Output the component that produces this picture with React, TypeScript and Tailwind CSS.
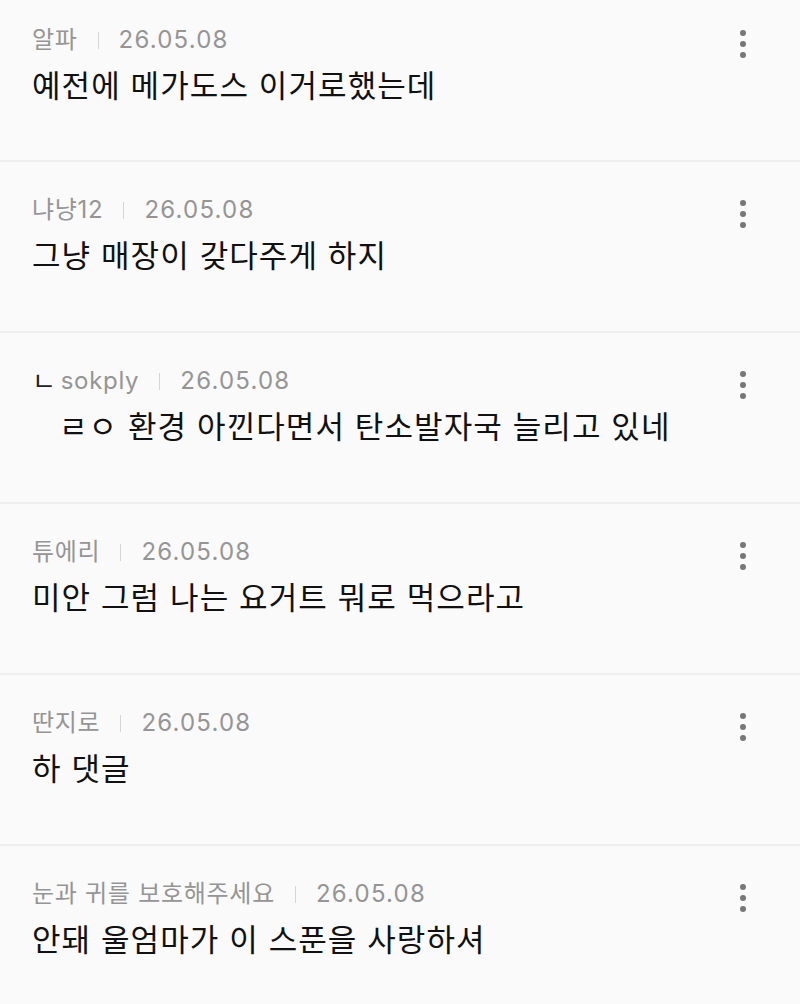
import React from 'react';

type Comment = {
  author: string;
  date: string;
  body: string;
  reply?: boolean;
};

const comments: Comment[] = [
  { author: '알파', date: '26.05.08', body: '예전에 메가도스 이거로했는데' },
  { author: '냐냥12', date: '26.05.08', body: '그냥 매장이 갖다주게 하지' },
  { author: 'sokply', date: '26.05.08', body: 'ㄹㅇ 환경 아낀다면서 탄소발자국 늘리고 있네', reply: true },
  { author: '튜에리', date: '26.05.08', body: '미안 그럼 나는 요거트 뭐로 먹으라고' },
  { author: '딴지로', date: '26.05.08', body: '하 댓글' },
  { author: '눈과 귀를 보호해주세요', date: '26.05.08', body: '안돼 울엄마가 이 스푼을 사랑하셔' },
];

const MoreIcon = () => (
  <svg width="8" height="30" viewBox="0 0 8 30" className="text-[#777777]">
    <circle cx="4" cy="4" r="3" fill="currentColor" />
    <circle cx="4" cy="15" r="3" fill="currentColor" />
    <circle cx="4" cy="26" r="3" fill="currentColor" />
  </svg>
);

const CommentRow: React.FC<{ c: Comment }> = ({ c }) => (
  <div className="flex h-[171px] first:h-[162px] pt-[32px] first:pt-[24px] pl-[32px] pr-[53px] border-b-2 border-[#eeeeee] last:border-b-0">
    <div className="flex-1 min-w-0">
      <div className="flex items-center h-[32px] text-[24px] text-[#959595] tracking-[0.03em]">
        {c.reply && <span className="text-[#222222] mr-[4px] text-[26px]">ㄴ</span>}
        <span>{c.author}</span>
        <span className="mx-[20px] w-px h-[17px] bg-[#d6d6d6]" />
        <span className="tracking-[0.05em]">{c.date}</span>
      </div>
      <div
        className={`mt-[10px] h-[40px] flex items-center text-[31px] text-[#111111] tracking-[0.035em] ${
          c.reply ? 'pl-[27px]' : ''
        }`}
      >
        {c.body}
      </div>
    </div>
    <div className="pt-[5px]">
      <MoreIcon />
    </div>
  </div>
);

export default function App() {
  return (
    <div
      className="w-[800px] h-[1004px] overflow-hidden bg-[#fafafa]"
      style={{ fontFamily: 'Inter, "Noto Sans CJK KR", sans-serif' }}
    >
      {comments.map((c, i) => (
        <CommentRow key={i} c={c} />
      ))}
    </div>
  );
}
